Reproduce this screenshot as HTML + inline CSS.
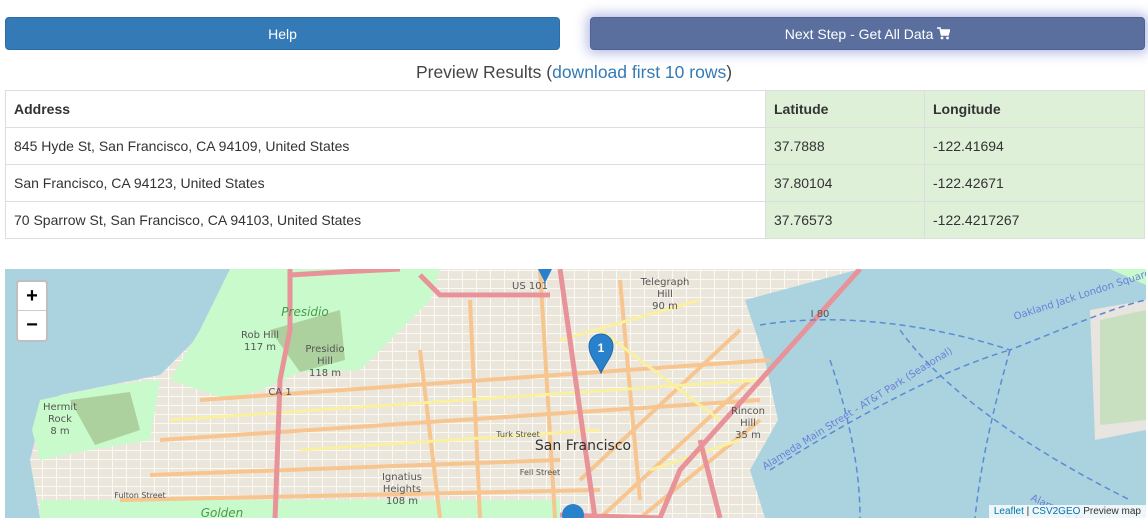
<!DOCTYPE html>
<html><head><meta charset="utf-8"><style>
*{box-sizing:border-box;margin:0;padding:0}
body{width:1148px;height:527px;background:#fff;font-family:"Liberation Sans",Arial,sans-serif;font-size:14px;color:#333;position:relative;overflow:hidden}
.btn{position:absolute;top:17px;height:33px;border-radius:4px;color:#fff;font-size:14px;line-height:33px;text-align:center}
#help{left:5px;width:555px;background:#337ab7;border:1px solid #2e6da4}
#next{left:590px;width:555px;background:#5a6f9e;border:1px solid #4e6290;box-shadow:0 0 12px 3px rgba(90,100,200,.45)}
h4{position:absolute;top:62px;left:0;width:1148px;text-align:center;font-weight:normal;font-size:17.5px;color:#444}
h4 a{color:#337ab7;text-decoration:none}
table{position:absolute;top:90px;left:5px;width:1140px;border-collapse:collapse}
td,th{border:1px solid #ddd;height:37px;padding:0 8px;text-align:left;vertical-align:middle}
th{font-weight:bold}
.g{background:#dff0d8}
#map{position:absolute;left:5px;top:269px;width:1141px;height:249px;overflow:hidden;background:#f2efe9}
.zoom{position:absolute;left:11px;top:11px;width:32px;height:62px;background:#fff;border:2px solid rgba(0,0,0,.25);border-radius:4px}
.zoom div{height:29px;text-align:center;font:bold 20px/29px "Liberation Sans",sans-serif;color:#000}
.zoom div:first-child{border-bottom:1px solid #ccc}
.attr{position:absolute;right:0;bottom:0;background:rgba(255,255,255,.8);font-size:10px;padding:1px 5px;color:#333}
.attr span{color:#0078a8}
</style></head><body>
<div class="btn" id="help">Help</div>
<div class="btn" id="next">Next Step - Get All Data <svg width="13" height="13" viewBox="0 0 13 13" style="vertical-align:-1px"><path d="M0 1H3L4.5 8H11L12.5 3H4" fill="none" stroke="#fff" stroke-width="1.6"/><rect x="4" y="3" width="8" height="5" fill="#fff"/><circle cx="5" cy="11" r="1.4" fill="#fff"/><circle cx="10.5" cy="11" r="1.4" fill="#fff"/></svg></div>
<h4>Preview Results (<a>download first 10 rows</a>)</h4>
<table>
<tr><th style="width:760px">Address</th><th class="g" style="width:159px">Latitude</th><th class="g">Longitude</th></tr>
<tr><td>845 Hyde St, San Francisco, CA 94109, United States</td><td class="g">37.7888</td><td class="g">-122.41694</td></tr>
<tr><td>San Francisco, CA 94123, United States</td><td class="g">37.80104</td><td class="g">-122.42671</td></tr>
<tr><td>70 Sparrow St, San Francisco, CA 94103, United States</td><td class="g">37.76573</td><td class="g">-122.4217267</td></tr>
</table>
<div id="map">
<svg width="1141" height="249" viewBox="5 269 1141 249" style="position:absolute;left:0;top:0">
<defs><pattern id="grid" width="14" height="9" patternUnits="userSpaceOnUse"><rect width="14" height="9" fill="#ebe6dc"/><path d="M0 0H14M0 0V9" stroke="#fbf9f2" stroke-width="2"/></pattern></defs>
<rect x="5" y="269" width="1141" height="249" fill="url(#grid)"/>
<path d="M5 269H230L215 300L195 340L160 375L110 385L60 395L40 420L30 460L40 518H5Z" fill="#aad3df"/>
<path d="M230 269H440L430 300L400 330L360 370L300 372L260 390L230 400L170 380L200 330Z" fill="#c8facc"/>
<path d="M270 330L340 310L345 360L300 372Z" fill="#add19e"/>
<path d="M40 400L110 385L160 380L150 440L90 450L40 460L32 430Z" fill="#c8facc"/>
<path d="M70 400L130 392L140 430L95 445Z" fill="#add19e"/>
<path d="M40 500H560V518H40Z" fill="#c8facc"/>
<path d="M860 269H1146V518H765L750 470L778 420L765 360L755 330L745 300Z" fill="#aad3df"/>
<path d="M1090 310L1146 300V430L1095 440Z" fill="#e8e4df"/>
<path d="M1100 320L1146 310V420L1100 425Z" fill="#c8e0c0"/>
<path d="M1110 269H1146V285Z" fill="#c8facc"/>
<g stroke="#f7c58f" stroke-width="4" fill="none">
<path d="M200 400L770 360"/><path d="M160 440L760 400"/><path d="M150 475L560 460"/><path d="M120 500L600 490"/>
<path d="M540 269L555 518"/><path d="M470 300L480 518"/><path d="M420 350L440 518"/><path d="M620 280L640 500"/>
<path d="M600 518L750 380"/><path d="M640 518L760 420"/><path d="M580 480L740 330"/>
</g>
<g stroke="#fbf0a0" stroke-width="3" fill="none"><path d="M170 420L760 380"/><path d="M300 450L600 430"/><path d="M560 340L700 300"/><path d="M600 330L720 420"/><path d="M650 470L740 440"/></g>
<g stroke="#e8929a" stroke-width="5" fill="none">
<path d="M290 269V330L280 380L275 520"/><path d="M290 275L340 272L400 269"/><path d="M420 275L440 295H550"/>
<path d="M560 269L595 518"/><path d="M860 269L680 470L660 518"/><path d="M700 440L720 518"/><path d="M560 515L660 518"/>
</g>
<g stroke="#5b8bd6" stroke-width="1.5" fill="none" stroke-dasharray="6 4">
<path d="M760 325C850 310 950 330 1010 350C1060 330 1120 305 1146 300"/>
<path d="M770 470C850 420 940 370 1010 350"/>
<path d="M1010 350C990 420 980 470 975 518"/>
<path d="M900 330C950 400 1050 460 1130 500"/>
<path d="M830 360C850 420 860 470 860 518"/>
</g>
<g font-family="DejaVu Sans,sans-serif" font-size="10" fill="#555" text-anchor="middle">
<text x="260" y="338">Rob Hill</text><text x="260" y="350">117 m</text>
<text x="325" y="352">Presidio</text><text x="325" y="364">Hill</text><text x="325" y="376">118 m</text>
<text x="60" y="410">Hermit</text><text x="60" y="422">Rock</text><text x="60" y="434">8 m</text>
<text x="402" y="480">Ignatius</text><text x="402" y="492">Heights</text><text x="402" y="504">108 m</text>
<text x="665" y="285">Telegraph</text><text x="665" y="297">Hill</text><text x="665" y="309">90 m</text>
<text x="748" y="414">Rincon</text><text x="748" y="426">Hill</text><text x="748" y="438">35 m</text>
<text x="280" y="395">CA 1</text><text x="530" y="289">US 101</text><text x="820" y="317">I 80</text>
<text x="140" y="498" font-size="8">Fulton Street</text>
<text x="518" y="437" font-size="8">Turk Street</text><text x="540" y="475" font-size="8">Fell Street</text>
<text x="305" y="316" fill="#4a9a4a" font-style="italic" font-size="12">Presidio</text>
<text x="222" y="517" fill="#4a9a4a" font-style="italic" font-size="12">Golden</text>
<text x="583" y="450" font-size="14" fill="#333">San Francisco</text>
</g>
<g font-family="DejaVu Sans,sans-serif" font-size="10" fill="#6a7fd8">
<text transform="translate(765 470) rotate(-32)">Alameda Main Street - AT&amp;T Park (Seasonal)</text>
<text transform="translate(1015 320) rotate(-18)">Oakland Jack London Square - South San Francisco</text>
<text transform="translate(1030 500) rotate(25)">Alameda Harbor Bay</text>
</g>
<path d="M601 373C596 362 589 356 589 346A12 12 0 0 1 613 346C613 356 606 362 601 373Z" fill="#2a81cb" stroke="#1f6aa8"/>
<text x="601" y="352" font-family="Liberation Sans" font-size="12" font-weight="bold" fill="#fff" text-anchor="middle">1</text>
<circle cx="573" cy="515" r="11" fill="#2a81cb"/>
<path d="M538 269L545 283L552 269Z" fill="#2a81cb"/>
</svg>
<div class="zoom"><div>+</div><div>−</div></div>
<div class="attr"><span>Leaflet</span> | <span>CSV2GEO</span> Preview map</div>
</div>
</body></html>
